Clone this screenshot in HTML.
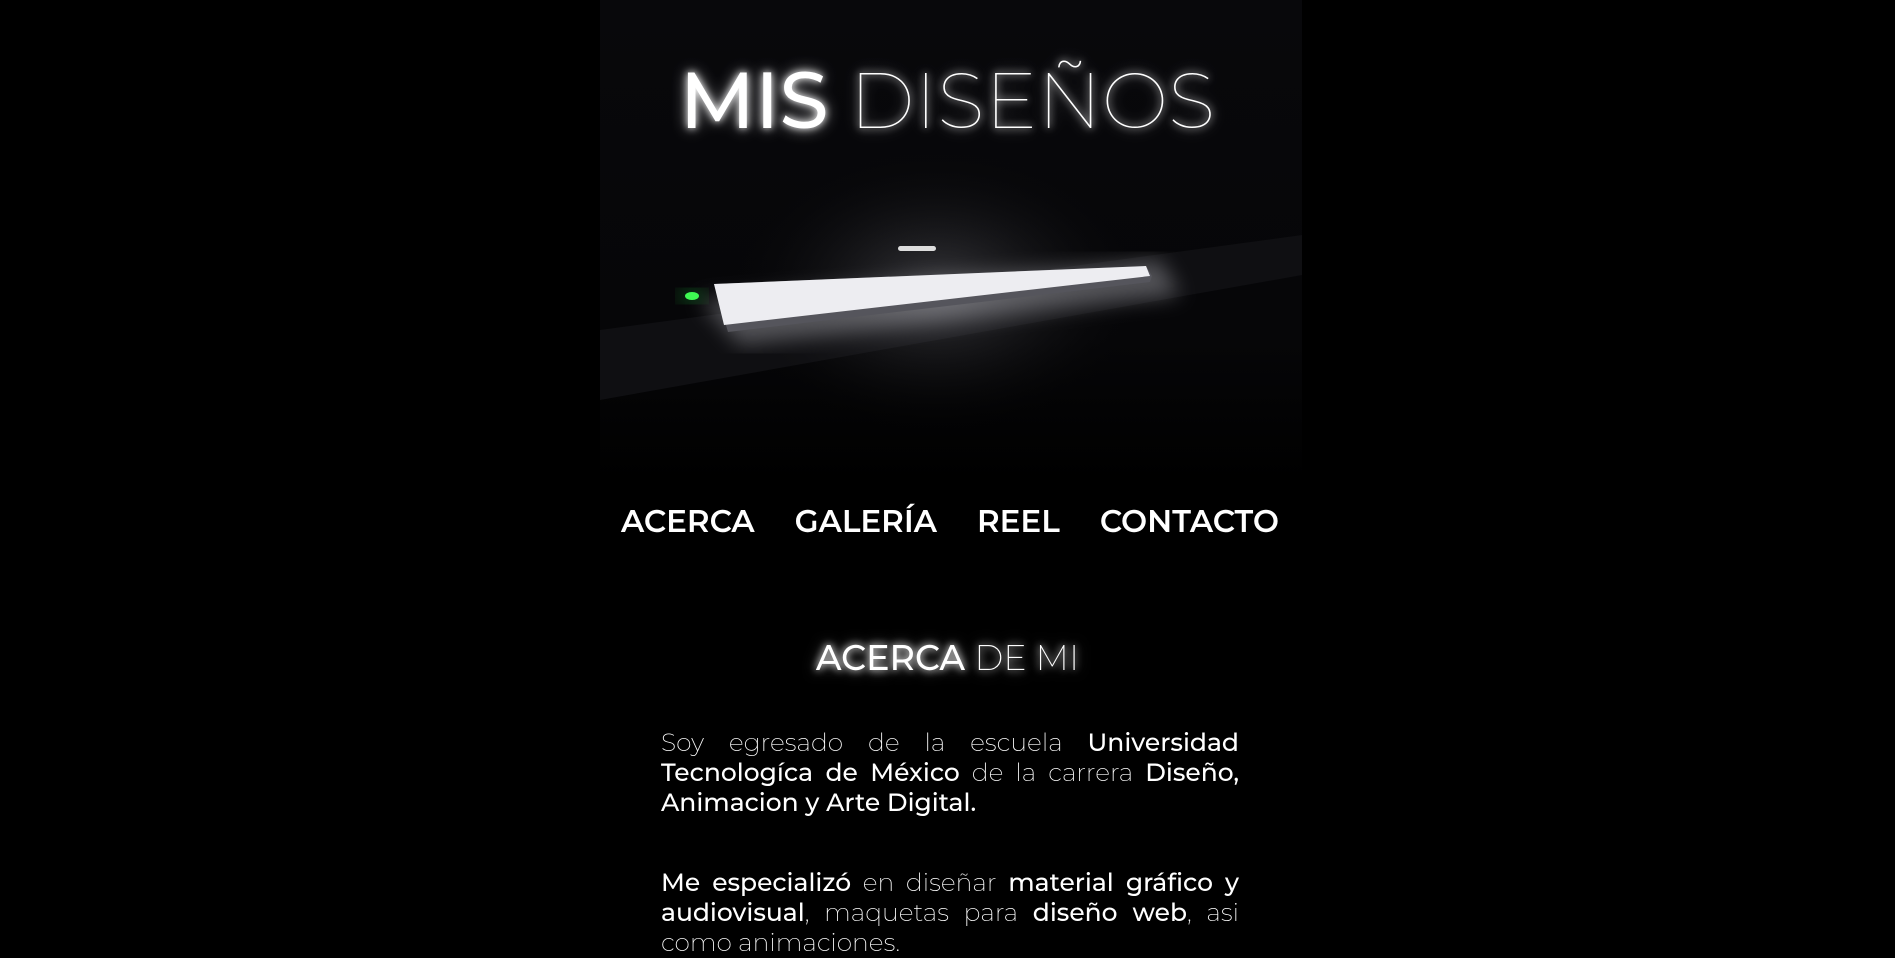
<!DOCTYPE html>
<html><head><meta charset="utf-8"><style>
body{margin:0;background:#000;width:1895px;height:914px;overflow:hidden;font-family:"Montserrat","Liberation Sans",sans-serif;color:#fff}
.hero{position:absolute;left:600px;top:0;width:702px;height:483px}
.title{position:absolute;left:0;width:1895px;top:52px;text-align:center;font-size:79px;text-shadow:0 0 8px #fff,0 0 16px rgba(255,255,255,.6)}
.title b{font-weight:500}.title span{font-weight:100}
nav{position:absolute;top:502px;left:621px;width:658px;display:flex;justify-content:space-between;font-size:31px;font-weight:600}
h2{position:absolute;top:636px;left:0;width:1895px;text-align:center;margin:0;font-size:35px;font-weight:500;text-shadow:0 0 8px #fff,0 0 14px rgba(255,255,255,.5)}
h2 span{font-weight:200}
p{position:absolute;left:661px;width:578px;margin:0;font-size:25px;line-height:30px;text-align:justify;font-weight:200}
p b{font-weight:500}
</style></head><body>
<svg class="hero" width="702" height="483" viewBox="0 0 702 483">
<defs>
<linearGradient id="bg" x1="0" y1="0" x2="0" y2="1"><stop offset="0" stop-color="#08080b"/><stop offset=".7" stop-color="#060608"/><stop offset="1" stop-color="#000"/></linearGradient>
<radialGradient id="gl" cx=".48" cy=".6" r=".3"><stop offset="0" stop-color="#9a9aa2" stop-opacity=".35"/><stop offset="1" stop-color="#000" stop-opacity="0"/></radialGradient>
<filter id="b"><feGaussianBlur stdDeviation="10"/></filter>
</defs>
<rect width="702" height="483" fill="url(#bg)"/>
<polygon points="0,330 702,235 702,275 0,400" fill="#0f0f12"/>
<rect width="702" height="483" fill="url(#gl)"/>
<polygon points="100,300 560,260 580,295 140,345" fill="#d0d0d8" opacity=".35" filter="url(#b)"/>
<polygon points="114,284 546,266 552,276 550,282 128,332" fill="#55555c"/>
<polygon points="114,284 546,266 550,276 124,325" fill="#ededf1"/>
<rect x="298" y="246" width="38" height="5" rx="2.5" fill="#ddd"/>
<ellipse cx="92" cy="296" rx="7" ry="4" fill="#4f5"/>
<ellipse cx="92" cy="296" rx="14" ry="7" fill="#2d4" opacity=".4" filter="url(#b)"/>
</svg>
<div class="title"><b>MIS</b> <span>DISEÑOS</span></div>
<nav><span>ACERCA</span><span>GALERÍA</span><span>REEL</span><span>CONTACTO</span></nav>
<h2>ACERCA <span>DE MI</span></h2>
<p style="top:728px">Soy egresado de la escuela <b>Universidad Tecnologíca de México</b> de la carrera <b>Diseño, Animacion y Arte Digital.</b></p>
<p style="top:868px"><b>Me especializó</b> en diseñar <b>material gráfico y audiovisual</b>, maquetas para <b>diseño web</b>, asi como animaciones.</p>
</body></html>
